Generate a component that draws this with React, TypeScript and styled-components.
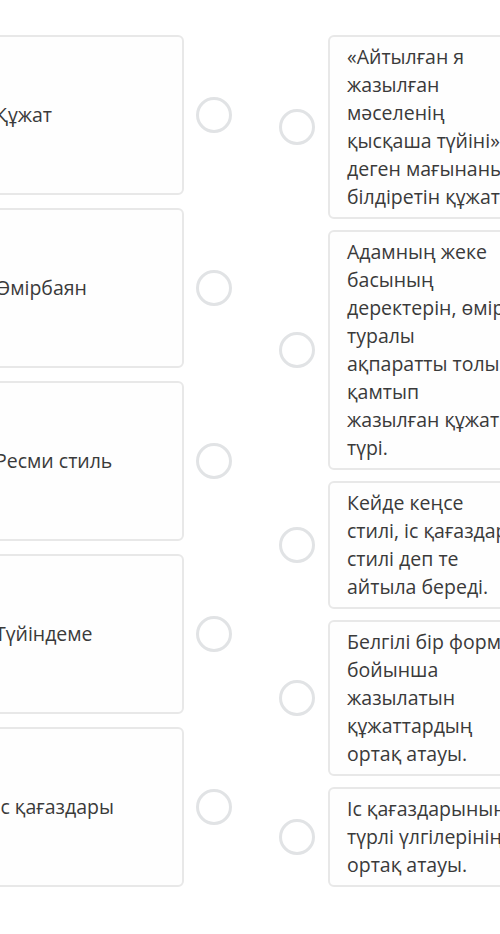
import React from "react";
import styled, { createGlobalStyle } from "styled-components";

const GlobalStyle = createGlobalStyle`
  html, body {
    margin: 0;
    padding: 0;
    background: #ffffff;
    overflow: hidden;
  }
  body {
    font-family: "Open Sans", "Noto Sans", sans-serif;
    color: #3a3a3a;
  }
`;

const terms = ["Құжат", "Өмірбаян", "Ресми стиль", "Түйіндеме", "Іс қағаздары"];

const definitions: string[][] = [
  [
    "«Айтылған я",
    "жазылған",
    "мәселенің",
    "қысқаша түйіні»",
    "деген мағынаны",
    "білдіретін құжат.",
  ],
  [
    "Адамның жеке",
    "басының",
    "деректерін, өмірі",
    "туралы",
    "ақпаратты толық",
    "қамтып",
    "жазылған құжат",
    "түрі.",
  ],
  ["Кейде кеңсе", "стилі, іс қағаздары", "стилі деп те", "айтыла береді."],
  ["Белгілі бір формада", "бойынша", "жазылатын", "құжаттардың", "ортақ атауы."],
  ["Іс қағаздарының", "түрлі үлгілерінің", "ортақ атауы."],
];

function App() {
  return (
    <Main>
      <GlobalStyle />
      <LeftColumn>
        {terms.map((term) => (
          <LeftRow key={term}>
            <TermCard>{term}</TermCard>
            <Dot />
          </LeftRow>
        ))}
      </LeftColumn>
      <RightColumn>
        {definitions.map((lines, i) => (
          <RightRow key={i}>
            <Dot />
            <DefinitionCard>
              {lines.map((line) => (
                <Line key={line}>{line}</Line>
              ))}
            </DefinitionCard>
          </RightRow>
        ))}
      </RightColumn>
    </Main>
  );
}

const Main = styled.main`
  display: flex;
  align-items: flex-start;
  gap: 47px;
  padding-top: 35px;
  margin-left: -20px;
  width: 700px;
`;

const LeftColumn = styled.div`
  display: flex;
  flex-direction: column;
  gap: 13px;
`;

const LeftRow = styled.div`
  display: flex;
  align-items: center;
  gap: 12px;
`;

const TermCard = styled.div`
  box-sizing: border-box;
  width: 204px;
  height: 160px;
  display: flex;
  align-items: center;
  padding-left: 13px;
  background: #fefefe;
  border: 2px solid #e8e8e8;
  border-radius: 6px;
  font-size: 19.5px;
  line-height: 28px;
`;

const Dot = styled.div`
  box-sizing: border-box;
  flex: none;
  width: 36px;
  height: 36px;
  border-radius: 50%;
  border: 3px solid #e1e3e5;
  background: #ffffff;
`;

const RightColumn = styled.div`
  display: flex;
  flex-direction: column;
  gap: 11px;
`;

const RightRow = styled.div`
  display: flex;
  align-items: center;
  gap: 13px;
`;

const DefinitionCard = styled.div`
  box-sizing: border-box;
  width: 240px;
  padding: 6px 16px 6px 17px;
  background: #fefefe;
  border: 2px solid #e8e8e8;
  border-radius: 6px;
  font-size: 19.5px;
  line-height: 28px;
  white-space: nowrap;
`;

const Line = styled.div``;

export default App;
